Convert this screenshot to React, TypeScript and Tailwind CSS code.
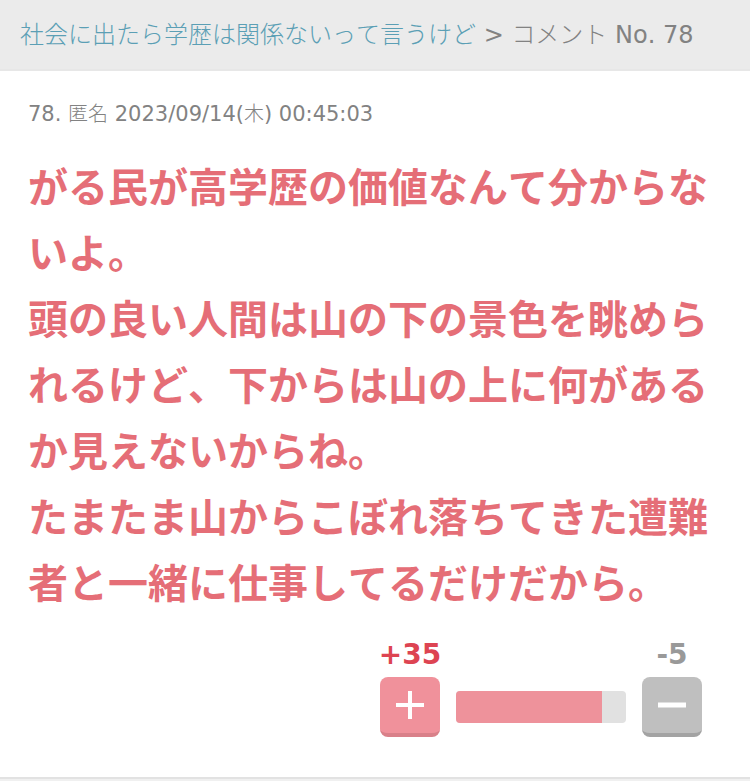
import React from "react";

const paragraphs = [
  "がる民が高学歴の価値なんて分からないよ。",
  "頭の良い人間は山の下の景色を眺められるけど、下からは山の上に何があるか見えないからね。",
  "たまたま山からこぼれ落ちてきた遭難者と一緒に仕事してるだけだから。",
];

export default function App() {
  const plus = 35;
  const minus = 5;
  return (
    <div className="min-h-screen bg-[#f0f0f0] font-['DejaVu_Sans','Noto_Sans_CJK_JP',sans-serif] text-[#828282] [font-kerning:none]">
      <nav className="border-b-2 border-[#e7e7e7] bg-[#ebebeb] px-5 pt-[17px] pb-4 text-2xl leading-9 whitespace-nowrap">
        <a href="#topic" className="font-light text-[#5b9fb5]">社会に出たら学歴は関係ないって言うけど</a>
        <span> &gt; <span className="font-light">コメント</span> No. 78</span>
      </nav>
      <main className="border-b-2 border-[#e2e2e2] bg-white px-7 pt-7 pb-10">
        <p className="text-[21px] leading-[30px]">
          78. <span className="text-xl leading-[30px] font-light">匿名</span> 2023/09/14(
          <span className="text-xl leading-[30px] font-light">木</span>) 00:45:03
        </p>
        <div className="pt-[26px] text-[40px] leading-[66px] font-bold text-[#e56e77]">
          {paragraphs.map((p) => (
            <p key={p}>{p}</p>
          ))}
        </div>
        <div className="flex items-end justify-end gap-4 pt-5 pr-5">
          <div className="flex w-15 flex-col items-center gap-1">
            <span className="text-[28px] leading-9 font-bold text-[#dd4452]">+{plus}</span>
            <button aria-label="plus" className="flex size-15 items-center justify-center rounded-lg border-b-4 border-[#d98089] bg-[#f0919b]">
              <svg viewBox="0 0 30 30" className="size-[30px]" stroke="white" strokeWidth="4">
                <path d="M1 15H29M15 1V29" />
              </svg>
            </button>
          </div>
          <div className="mb-[14px] flex h-8 w-[170px] overflow-hidden rounded-sm bg-[#e1e1e1]">
            <div className="bg-[#ee929b]" style={{ width: `${(plus / (plus + minus)) * 98}%` }} />
          </div>
          <div className="flex w-15 flex-col items-center gap-1">
            <span className="text-[28px] leading-9 font-bold text-[#999999]">-{minus}</span>
            <button aria-label="minus" className="flex size-15 items-center justify-center rounded-lg border-b-4 border-[#a3a3a3] bg-[#bfbfbf]">
              <svg viewBox="0 0 30 30" className="size-[30px]" stroke="white" strokeWidth="5">
                <path d="M1 15H29" />
              </svg>
            </button>
          </div>
        </div>
      </main>
    </div>
  );
}
